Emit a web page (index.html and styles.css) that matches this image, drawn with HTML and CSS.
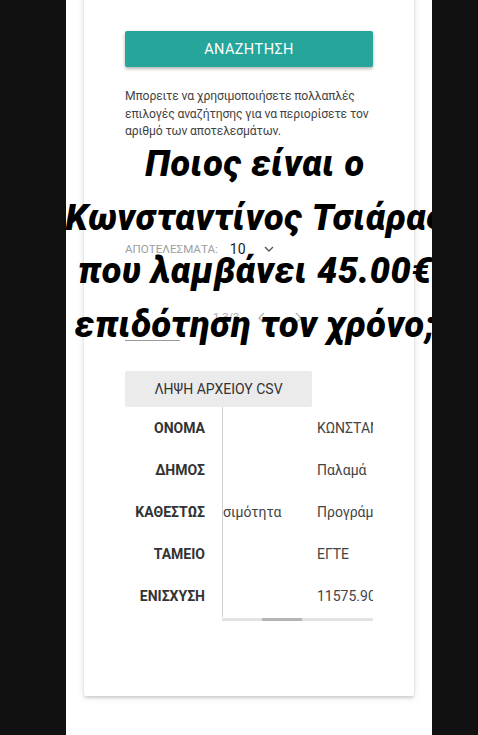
FILE: index.html
```html
<!DOCTYPE html>
<html lang="el">
<head>
<meta charset="utf-8">
<link rel="stylesheet" href="styles.css">
</head>
<body>
<div class="column">
  <div class="card">
    <button class="search-btn">ΑΝΑΖΗΤΗΣΗ</button>
    <p class="hint">Μπορειτε να χρησιμοποιήσετε πολλαπλές επιλογές αναζήτησης για να περιορίσετε τον αριθμό των αποτελεσμάτων.</p>
    <div class="results">
      <span class="results-label">ΑΠΟΤΕΛΕΣΜΑΤΑ:</span>
      <span class="results-value">10</span>
      <svg class="chev-down" width="12" height="8" viewBox="0 0 12 8"><path d="M2 2 L6 6 L10 2" fill="none" stroke="#555" stroke-width="1.4"/></svg>
    </div>
    <div class="pager">
      <span class="pager-text">1-3/3</span>
      <svg class="pager-chev" width="14" height="14" viewBox="0 0 14 14"><path d="M9 2 L4 7 L9 12" fill="none" stroke="#bbb" stroke-width="1.6"/></svg>
      <svg class="pager-chev" width="14" height="14" viewBox="0 0 14 14"><path d="M5 2 L10 7 L5 12" fill="none" stroke="#bbb" stroke-width="1.6"/></svg>
    </div>
    <div class="underline"></div>
    <button class="csv-btn">ΛΗΨΗ ΑΡΧΕΙΟΥ CSV</button>
    <div class="table">
      <div class="heads">
        <div class="th">ΟΝΟΜΑ</div>
        <div class="th">ΔΗΜΟΣ</div>
        <div class="th">ΚΑΘΕΣΤΩΣ</div>
        <div class="th">ΤΑΜΕΙΟ</div>
        <div class="th">ΕΝΙΣΧΥΣΗ</div>
      </div>
      <div class="scroller">
        <div class="cols">
          <div class="col col1">
            <div class="td"></div>
            <div class="td"></div>
            <div class="td">σιμότητα</div>
            <div class="td"></div>
            <div class="td"></div>
          </div>
          <div class="col col2">
            <div class="td">ΚΩΝΣΤΑΝΤΙΝΟΣ</div>
            <div class="td">Παλαμά</div>
            <div class="td">Προγράμματα</div>
            <div class="td">ΕΓΤΕ</div>
            <div class="td">11575.90</div>
          </div>
        </div>
        <div class="track"><div class="thumb"></div></div>
      </div>
    </div>
  </div>
  <div class="overlay">
    <div class="ol-line">Ποιος είναι ο</div>
    <div class="ol-line">Κωνσταντίνος Τσιάρας</div>
    <div class="ol-line">που λαμβάνει 45.00€</div>
    <div class="ol-line">επιδότηση τον χρόνο;</div>
  </div>
</div>
</body>
</html>
```

FILE: styles.css
```css
html, body {
  margin: 0;
  padding: 0;
  background: #111111;
  height: 735px;
  overflow: hidden;
  font-family: Roboto, "Noto Sans", sans-serif;
}

.column {
  position: relative;
  margin-left: 66px;
  width: 366px;
  height: 735px;
  background: #ffffff;
  overflow: hidden;
  padding-top: 1px;
  box-sizing: border-box;
}

.card {
  margin: -11px 18px 0 18px;
  padding: 41px 41px 75px 41px;
  background: #fff;
  box-shadow: 0 2px 3px rgba(0,0,0,0.14), 0 1px 8px rgba(0,0,0,0.10);
  border-radius: 2px;
  display: flex;
  flex-direction: column;
  align-items: flex-start;
}

.search-btn {
  width: 248px;
  height: 36px;
  border: none;
  border-radius: 2px;
  background: #26a69a;
  color: #ffffff;
  font-family: Roboto, sans-serif;
  font-size: 14.5px;
  letter-spacing: 0.4px;
  box-shadow: 0 2px 3px rgba(0,0,0,0.22), 0 1px 5px rgba(0,0,0,0.10);
  padding: 0;
}

.hint {
  margin: 21px 0 0 0;
  font-size: 12.2px;
  line-height: 17.6px;
  letter-spacing: -0.15px;
  color: #444;
  width: 260px;
}

.results {
  margin-top: 99px;
  display: flex;
  align-items: center;
  height: 18px;
}

.results-label {
  font-size: 11.6px;
  color: #9e9e9e;
}

.results-value {
  margin-left: 12px;
  font-size: 14px;
  color: #222;
}

.chev-down {
  margin-left: 17px;
}

.pager {
  margin-top: 52px;
  margin-left: 88px;
  display: flex;
  align-items: center;
  height: 16px;
}

.pager-text {
  font-size: 11px;
  color: #aaa;
  margin-right: 16px;
}

.pager-chev {
  margin-right: 22px;
}

.underline {
  margin-top: 14px;
  width: 55px;
  height: 1px;
  background: #999;
}

.csv-btn {
  margin-top: 30px;
  width: 187px;
  height: 36px;
  border: none;
  border-radius: 2px;
  background: #ebebeb;
  color: #333;
  font-family: Roboto, sans-serif;
  font-size: 14px;
  padding: 0;
}

.table {
  display: flex;
  width: 248px;
}

.heads {
  width: 97px;
  flex: none;
}

.th {
  height: 42px;
  line-height: 42px;
  text-align: right;
  padding-right: 17px;
  font-size: 14px;
  font-weight: 700;
  color: #333;
}

.scroller {
  width: 151px;
  flex: none;
  overflow: hidden;
}

.cols {
  display: flex;
  border-left: 1px solid #d0d0d0;
  white-space: nowrap;
}

.col1 {
  width: 94px;
  flex: none;
}

.col2 {
  flex: none;
  width: 120px;
}

.td {
  height: 42px;
  line-height: 42px;
  font-size: 14px;
  color: #444;
}

.track {
  height: 3px;
  margin-top: 1px;
  background: #e3e3e3;
  position: relative;
}

.thumb {
  position: absolute;
  left: 40px;
  top: 0;
  width: 40px;
  height: 3px;
  background: #b5b5b5;
}

.overlay {
  position: absolute;
  left: -60px;
  right: -72px;
  top: 138px;
  text-align: center;
  font-family: Roboto, sans-serif;
  font-weight: 900;
  font-style: italic;
  font-size: 36px;
  letter-spacing: 0.6px;
  line-height: 53.5px;
  color: #000;
  white-space: nowrap;
}
```
